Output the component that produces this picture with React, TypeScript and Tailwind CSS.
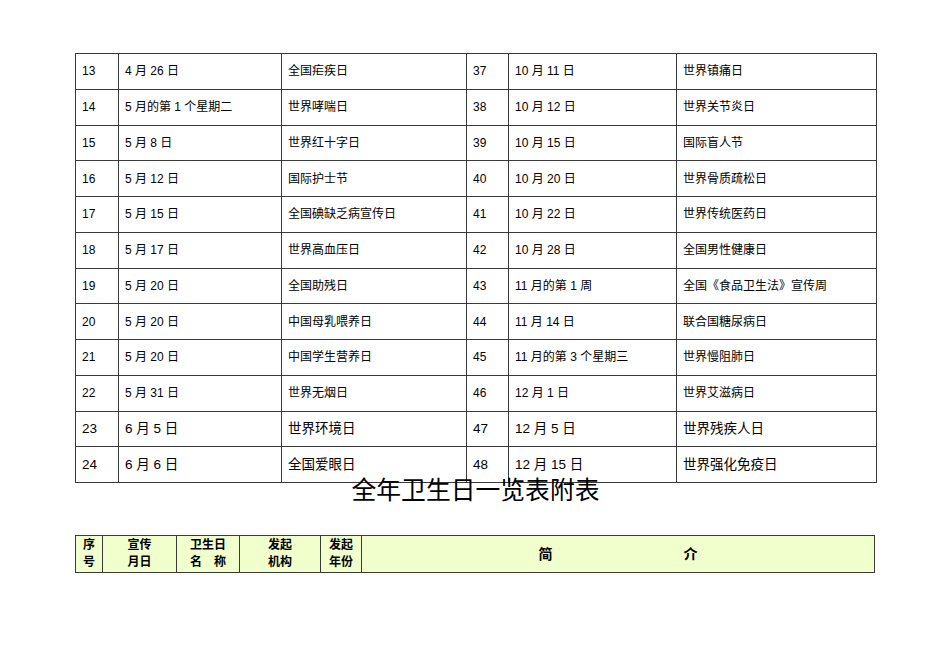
const rows: [string, string, string, string, string, string][] = [
  ["13", "4 月 26 日", "全国疟疾日", "37", "10 月 11 日", "世界镇痛日"],
  ["14", "5 月的第 1 个星期二", "世界哮喘日", "38", "10 月 12 日", "世界关节炎日"],
  ["15", "5 月 8 日", "世界红十字日", "39", "10 月 15 日", "国际盲人节"],
  ["16", "5 月 12 日", "国际护士节", "40", "10 月 20 日", "世界骨质疏松日"],
  ["17", "5 月 15 日", "全国碘缺乏病宣传日", "41", "10 月 22 日", "世界传统医药日"],
  ["18", "5 月 17 日", "世界高血压日", "42", "10 月 28 日", "全国男性健康日"],
  ["19", "5 月 20 日", "全国助残日", "43", "11 月的第 1 周", "全国《食品卫生法》宣传周"],
  ["20", "5 月 20 日", "中国母乳喂养日", "44", "11 月 14 日", "联合国糖尿病日"],
  ["21", "5 月 20 日", "中国学生营养日", "45", "11 月的第 3 个星期三", "世界慢阻肺日"],
  ["22", "5 月 31 日", "世界无烟日", "46", "12 月 1 日", "世界艾滋病日"],
  ["23", "6 月 5 日", "世界环境日", "47", "12 月 5 日", "世界残疾人日"],
  ["24", "6 月 6 日", "全国爱眼日", "48", "12 月 15 日", "世界强化免疫日"],
];

const colWidths = ["w-[43px]", "w-[163px]", "w-[185px]", "w-[42px]", "w-[168px]", "w-[200px]"];

const headCols: { w: string; lines: string[] }[] = [
  { w: "w-[27px]", lines: ["序", "号"] },
  { w: "w-[74px]", lines: ["宣传", "月日"] },
  { w: "w-[63px]", lines: ["卫生日", "名　称"] },
  { w: "w-[81px]", lines: ["发起", "机构"] },
  { w: "w-[41px]", lines: ["发起", "年份"] },
];

export default function App() {
  return (
    <div
      className="w-[950px] h-[672px] bg-white text-black overflow-hidden pt-[53px] pl-[75px]"
      style={{ fontFamily: '"Liberation Sans", "Noto Sans CJK SC", sans-serif' }}
    >
      <table className="border-collapse table-fixed w-[801px]">
        <colgroup>
          {colWidths.map((w, i) => (
            <col key={i} className={w} />
          ))}
        </colgroup>
        <tbody>
          {rows.map((r, i) => {
            const big = i >= 10;
            return (
              <tr key={r[0]} className="h-[35.75px]">
                {r.map((cell, j) => (
                  <td
                    key={j}
                    className={`border border-[#3a3a3a] pl-[6px] py-0 align-middle whitespace-nowrap leading-none ${
                      big ? "text-[13.5px]" : "text-[12px]"
                    }`}
                  >
                    {cell}
                  </td>
                ))}
              </tr>
            );
          })}
        </tbody>
      </table>

      <div className="w-[801px] -mt-[7px] text-center text-[24.8px] leading-[29px]">
        全年卫生日一览表附表
      </div>

      <table className="border-collapse table-fixed w-[799px] mt-[30px] bg-[#f0ffcc]">
        <tbody>
          <tr className="h-[37px]">
            {headCols.map((c, i) => (
              <td
                key={i}
                className={`${c.w} border border-[#3a3a3a] p-0 text-center align-middle font-bold text-[12px] leading-[17px]`}
              >
                {c.lines.map((l) => (
                  <div key={l} className="whitespace-pre">
                    {l}
                  </div>
                ))}
              </td>
            ))}
            <td className="w-[513px] border border-[#3a3a3a] p-0 align-middle font-bold text-[14px]">
              <div className="flex justify-center gap-[131px]">
                <span>简</span>
                <span>介</span>
              </div>
            </td>
          </tr>
        </tbody>
      </table>
    </div>
  );
}
